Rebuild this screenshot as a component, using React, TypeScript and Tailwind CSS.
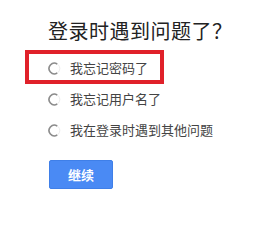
import React from "react";

const options = ["我忘记密码了", "我忘记用户名了", "我在登录时遇到其他问题"];

function Radio() {
  return (
    <svg width="13" height="13" viewBox="0 0 13 13" className="shrink-0">
      <circle cx="6.5" cy="6.5" r="5.3" fill="#fff" stroke="#ececec" strokeWidth="1" />
      <path d="M9.2 2 A5.3 5.3 0 1 0 9.2 11" fill="none" stroke="#8c8c8c" strokeWidth="1.6" />
    </svg>
  );
}

export default function App() {
  return (
    <div
      className="relative w-[280px] h-[250px] bg-white pl-[48px] pt-[18px]"
      style={{ fontFamily: '"Noto Sans CJK SC", sans-serif' }}
    >
      <h1 className="text-[20px] leading-[26px] text-[#222] tracking-[0.5px]">登录时遇到问题了？</h1>

      <div className="mt-[15px] flex flex-col gap-[13px]">
        {options.map((o) => (
          <label key={o} className="flex items-center gap-[9px] h-[18px] text-[13px] text-[#444]">
            <Radio />
            {o}
          </label>
        ))}
      </div>

      <button className="mt-[21px] ml-[1px] w-[64px] h-[29px] rounded-[2px] bg-[#4a8af4] border border-[#3f7fe8] text-white text-[13px] font-bold">
        继续
      </button>

      <div className="absolute left-[25px] top-[50px] w-[139px] h-[34px] border-[4px] border-[#e0212a] pointer-events-none" />
    </div>
  );
}
